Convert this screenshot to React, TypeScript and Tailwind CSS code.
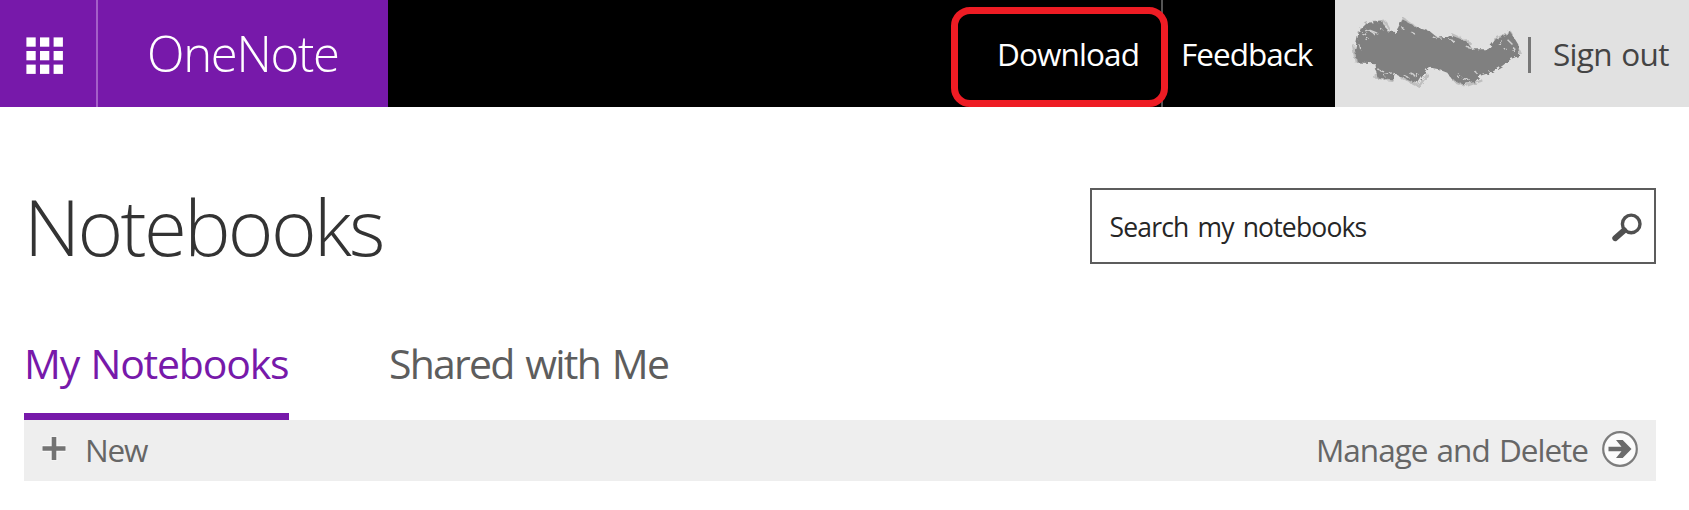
function AppLauncherIcon() {
  const cells = [0, 13.6, 27.2];
  return (
    <svg className="h-[38px] w-[38px]" viewBox="0 0 38 38" fill="#fff" aria-hidden="true">
      {cells.map((y) => cells.map((x) => <rect key={`${x}-${y}`} x={x + 0.4} y={y + 0.4} width="9.3" height="9.3" />))}
    </svg>
  );
}

function ScribbledName() {
  return (
    <svg className="h-[76px] w-[176px] shrink-0 pb-1" viewBox="2 0 181 76" preserveAspectRatio="none" aria-hidden="true">
      <defs>
        <filter id="rough" x="-5%" y="-10%" width="110%" height="120%" colorInterpolationFilters="sRGB">
          <feTurbulence type="fractalNoise" baseFrequency="0.22" numOctaves="2" seed="4" result="n" />
          <feDisplacementMap in="SourceGraphic" in2="n" scale="6" result="d" />
          <feGaussianBlur in="d" stdDeviation="0.6" />
        </filter>
      </defs>
      <g filter="url(#rough)">
        <path
          d="M9 16 18 7 34 6 38 16 47 17 54 4 68 12 82 16 90 23 106 21 120 27 126 35 142 35 150 24 160 21 165 17 173 30 174 42 166 45 156 53 146 59 134 63 128 70 116 72 105 67 100 60 90 56 80 54 76 61 70 71 62 69 50 63 46 61 44 67 28 65 26 50 7 49 5 36Z"
          fill="#808080"
        />
        <path
          d="M8 18 17 8 36 6 41 15M49 15 55 3 68 12M104 19 123 28M148 25 165 17 175 40M28 54 26 65 46 68M51 64 71 74 80 61M105 68 119 74 136 68M3 30 6 49"
          fill="none"
          stroke="#808080"
          strokeOpacity="0.35"
          strokeWidth="2.4"
        />
        <path
          d="M13 20q6-7 11-2M16 25l3-2M20 15l8 3M10 31l1 4M31 13l3 3M29 57l6 2M34 62l9-2M61 60l6 3M60 65l-4-2M53 11l2 4M62 16l4 2M68 64l2-3M85 22l4 2M102 25l5 1M115 66l8 1M110 64l3-2M129 59l2 2M120 33l8 2M152 30l5-3M162 25l4 4M168 33l1 5M158 35l2-1"
          fill="none"
          stroke="#d0d0d0"
          strokeWidth="1.5"
        />
      </g>
    </svg>
  );
}

function SearchIcon() {
  return (
    <svg className="h-[30px] w-[32px]" viewBox="0 0 32 30" fill="none" stroke="#505050" aria-hidden="true">
      <circle cx="20.2" cy="10.9" r="8.8" strokeWidth="3.4" />
      <path d="M13.3 17.3 4.2 25.3" strokeWidth="5.8" strokeLinecap="round" />
    </svg>
  );
}

function PlusIcon() {
  return (
    <svg className="h-[26px] w-[26px]" viewBox="0 0 26 26" aria-hidden="true">
      <path d="M13 .5v24M1 12.5h24" stroke="#f7f7f7" strokeWidth="7" />
      <path d="M13 1v23M1.5 12.5h23" stroke="#737373" strokeWidth="4.6" />
    </svg>
  );
}

function ArrowCircleIcon() {
  return (
    <svg className="h-[36px] w-[36px]" viewBox="0 0 36 36" aria-hidden="true">
      <circle cx="18" cy="18" r="16.8" fill="#fbfbfb" stroke="#7c7c7c" strokeWidth="2.2" />
      <path d="M6.5 15.8H19.5L14 9H20.7L29.5 17.9 20.7 27H14L19.5 20.2H6.5Z" fill="#6b6b6b" />
    </svg>
  );
}

export default function App() {
  return (
    <div className="h-[510px] w-[1689px] overflow-hidden bg-white font-['Open_Sans',sans-serif] whitespace-nowrap">
      <header className="flex h-[107px] bg-black text-[31.5px] text-white">
        <button className="flex w-[98px] items-center border-r-2 border-[#a45fc8] bg-[#7719aa] pt-1 pl-[26px]">
          <AppLauncherIcon />
        </button>
        <div className="flex w-[290px] items-center bg-[#7719aa] pt-px pl-[49px] text-[49px] font-light tracking-[-1.28px]">
          OneNote
        </div>
        <nav className="flex flex-1 justify-end">
          <a className="relative flex w-[212px] items-center border-r-2 border-[#555] pl-[46px] tracking-[-0.9px]">
            Download
            <span className="absolute top-[7px] left-0 h-[100px] w-[217px] rounded-[19px] border-[7px] border-[#ee1c24]" />
          </a>
          <a className="flex w-[172px] items-center pl-[18px] tracking-[-1px]">Feedback</a>
        </nav>
        <div className="flex w-[354px] items-center bg-[#e1e1e1] pl-[17px] text-[#444]">
          <ScribbledName />
          <span className="mt-[3px] h-[36px] w-[3px] bg-[#777]" />
          <a className="ml-[22px] tracking-[-0.7px] [word-spacing:2px]">Sign out</a>
        </div>
      </header>

      <main className="pr-[33px] pl-6">
        <div className="mt-[81px] flex h-[76px] items-center justify-between">
          <h1 className="pb-px text-[78px] leading-[76px] font-light tracking-[-2.7px] text-[#333]">Notebooks</h1>
          <div className="flex h-[76px] w-[566px] items-center justify-between border-2 border-[#5c5c5c] pt-[3px] pr-[11px] pl-[17.5px] text-[26.5px] tracking-[-0.83px] text-[#262626] [word-spacing:3px]">
            Search my notebooks
            <SearchIcon />
          </div>
        </div>

        <div className="mt-[47px] flex h-[109px] text-[41px]">
          <a className="flex w-[265px] items-center border-b-7 border-[#7719aa] pt-[3px] tracking-[-1.2px] text-[#7719aa] [word-spacing:2px]">
            My Notebooks
          </a>
          <a className="ml-[100px] flex items-center border-b-7 border-transparent pt-[3px] tracking-[-1.8px] text-[#5d5d5d] [word-spacing:3px]">
            Shared with Me
          </a>
        </div>

        <div className="flex h-[61px] items-center justify-between bg-[#eee] pr-[18px] pb-[2px] pl-[17px] text-[31.5px] text-[#666]">
          <a className="flex items-center gap-[18px] tracking-[-1.25px]">
            <span className="pb-[2px]">
              <PlusIcon />
            </span>
            New
          </a>
          <a className="flex items-center gap-[14px] tracking-[-1px] [word-spacing:2px]">
            Manage and Delete
            <span className="pb-px">
              <ArrowCircleIcon />
            </span>
          </a>
        </div>
      </main>
    </div>
  );
}
